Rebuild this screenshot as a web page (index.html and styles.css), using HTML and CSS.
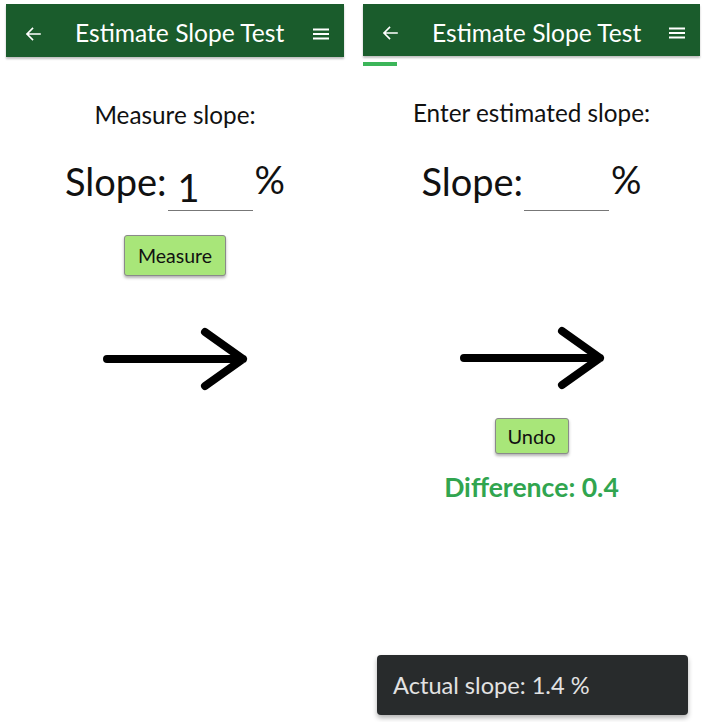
FILE: index.html
```html
<!DOCTYPE html>
<html>
<head>
<meta charset="utf-8">
<link rel="stylesheet" href="styles.css">
</head>
<body>
<div class="screens">
  <section class="screen">
    <header class="appbar">
      <svg class="back" viewBox="0 0 16 16" width="16" height="16"><path d="M15 8H2M7.5 2.5L2 8l5.5 5.5" fill="none" stroke="#fff" stroke-width="1.6" stroke-linecap="square"/></svg>
      <h1 class="title">Estimate Slope Test</h1>
      <svg class="menu" viewBox="0 0 16 12" width="16" height="12"><path d="M0 1.5h16M0 6h16M0 10.5h16" stroke="#fff" stroke-width="1.8"/></svg>
    </header>
    <div class="content">
      <p class="prompt">Measure slope:</p>
      <div class="slope-row">
        <span class="label">Slope:</span>
        <span class="field"><span class="value">1</span></span>
        <span class="unit">%</span>
      </div>
      <button class="btn btn-measure">Measure</button>
      <svg class="arrow arrow-left" viewBox="0 0 152 64" width="152" height="64"><path d="M8 32H144M106 5L144 32L106 59" fill="none" stroke="#000" stroke-width="8" stroke-linecap="round" stroke-linejoin="round"/></svg>
    </div>
  </section>

  <section class="screen screen-right">
    <header class="appbar">
      <svg class="back" viewBox="0 0 16 16" width="16" height="16"><path d="M15 8H2M7.5 2.5L2 8l5.5 5.5" fill="none" stroke="#fff" stroke-width="1.6" stroke-linecap="square"/></svg>
      <h1 class="title">Estimate Slope Test</h1>
      <svg class="menu" viewBox="0 0 16 12" width="16" height="12"><path d="M0 1.5h16M0 6h16M0 10.5h16" stroke="#fff" stroke-width="1.8"/></svg>
    </header>
    <div class="indicator"></div>
    <div class="content content-right">
      <p class="prompt">Enter estimated slope:</p>
      <div class="slope-row">
        <span class="label">Slope:</span>
        <span class="field"></span>
        <span class="unit">%</span>
      </div>
      <svg class="arrow arrow-right" viewBox="0 0 152 64" width="152" height="64"><path d="M8 32H144M106 5L144 32L106 59" fill="none" stroke="#000" stroke-width="8" stroke-linecap="round" stroke-linejoin="round"/></svg>
      <button class="btn btn-undo">Undo</button>
      <p class="difference">Difference: 0.4</p>
    </div>
    <div class="snackbar">Actual slope: 1.4 %</div>
  </section>
</div>
</body>
</html>
```

FILE: styles.css
```css
* { box-sizing: border-box; }
html, body { margin: 0; padding: 0; background: #fff; }
body {
  font-family: Lato, "Noto Sans", sans-serif;
  color: #111;
  width: 706px;
  height: 722px;
  overflow: hidden;
}
.screens {
  display: flex;
  gap: 19px;
  padding: 4px 6px 0 6px;
  height: 722px;
}
.screen {
  position: relative;
  width: 338px;
  height: 718px;
  display: flex;
  flex-direction: column;
}
.screen-right { width: 337px; }
.appbar {
  height: 53px;
  padding-top: 6px;
  background: #1a5c2c;
  display: flex;
  align-items: center;
  box-shadow: 0 2px 2px rgba(0,0,0,0.25);
  position: relative;
  z-index: 1;
}
.screen-right .appbar { height: 52px; }
.back { margin-left: 19px; flex: none; }
.title {
  margin: 0 0 0 34px;
  font-weight: 400;
  font-size: 24.6px;
  color: #fff;
  line-height: 1;
}
.menu { margin-left: auto; margin-right: 15px; flex: none; }
.indicator {
  width: 34px;
  height: 4px;
  background: #3cb559;
  margin-top: 6px;
}
.content {
  display: flex;
  flex-direction: column;
  align-items: center;
}
.prompt {
  margin: 44px 0 0;
  font-size: 24.3px;
  line-height: 28px;
}
.content-right .prompt { margin-top: 33px; }
.slope-row {
  display: flex;
  align-items: flex-end;
  margin-top: 28px;
  font-size: 38px;
  line-height: 44px;
}
.content-right .slope-row { margin-top: 30px; }
.label { padding-bottom: 8px; }
.unit { padding-bottom: 10px; margin-left: 2px; }
.field {
  display: inline-block;
  width: 85px;
  height: 48px;
  margin-left: 1px;
  border-bottom: 1px solid #777;
  padding-left: 10px;
}
.value { display: inline-block; padding-top: 2px; }
.btn {
  font-family: Lato, "Noto Sans", sans-serif;
  font-size: 19.5px;
  color: #111;
  background: #a8e679;
  border: 1px solid #8a8a8a;
  border-radius: 3px;
  box-shadow: 0 2px 3px rgba(0,0,0,0.3);
  padding: 0;
}
.btn-measure {
  width: 102px;
  height: 41px;
  margin-top: 24px;
}
.arrow { display: block; }
.arrow-left { margin-top: 51px; }
.arrow-right { margin-top: 115px; }
.btn-undo {
  width: 74px;
  height: 36px;
  margin-top: 28px;
  font-size: 20px;
}
.difference {
  margin: 18px 0 0;
  font-size: 26.6px;
  font-weight: 700;
  color: #31a54f;
  line-height: 30px;
}
.snackbar {
  position: absolute;
  left: 14px;
  right: 12px;
  bottom: 7px;
  height: 60px;
  background: #282b2c;
  border-radius: 4px;
  box-shadow: 0 3px 5px rgba(0,0,0,0.3);
  color: #e2e2e2;
  font-size: 23.6px;
  display: flex;
  align-items: center;
  padding-left: 16px;
}
```
